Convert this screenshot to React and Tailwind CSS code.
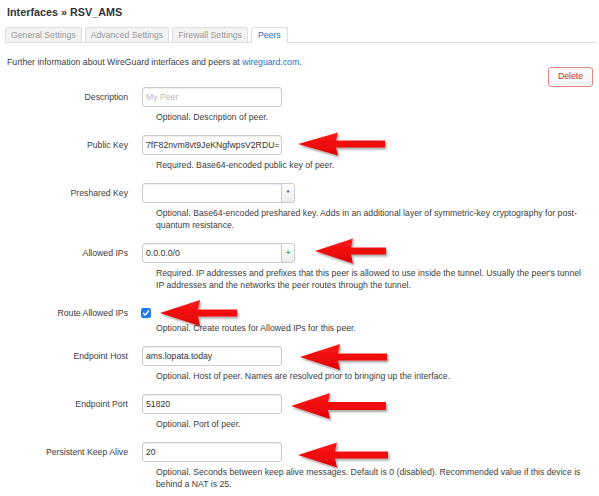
import React from 'react';

const arrows = [
  { tx: 298, ty: 144, bx: 338, ex: 385, h: 11.5, t: 3.5 },
  { tx: 315, ty: 251, bx: 353, ex: 386, h: 12.5, t: 3.5 },
  { tx: 160, ty: 313, bx: 200, ex: 237, h: 13, t: 3.5 },
  { tx: 300, ty: 357, bx: 340, ex: 387, h: 13, t: 3.5 },
  { tx: 291, ty: 406, bx: 330, ex: 386, h: 13, t: 4 },
  { tx: 298, ty: 455, bx: 337, ex: 388, h: 12.5, t: 3.5 },
];

const arrowPoints = ({ tx, ty, bx, ex, h, t }) =>
  [
    [tx, ty],
    [bx, ty - h],
    [bx - 2, ty - t],
    [ex, ty - t],
    [ex, ty + t],
    [bx - 2, ty + t],
    [bx, ty + h],
  ]
    .map((p) => p.join(','))
    .join(' ');

const Field = ({ value, placeholder, addon, addonClass }) => (
  <div className="flex h-[20px]">
    <input
      readOnly
      defaultValue={value}
      placeholder={placeholder}
      className={`w-[140px] h-[20px] border border-[#ccc] bg-white pl-[3px] pr-px text-[8.7px] text-[#333] outline-none placeholder:text-[#bbb] shadow-[inset_0_1px_1px_rgba(0,0,0,0.075)] ${
        addon ? 'rounded-l-[3px]' : 'rounded-[3px]'
      }`}
    />
    {addon && (
      <div
        className={`w-[14px] h-[20px] -ml-px flex items-center justify-center border border-[#ccc] rounded-r-[3px] bg-gradient-to-b from-white to-[#ececec] text-[8px] font-bold ${addonClass}`}
      >
        {addon}
      </div>
    )}
  </div>
);

const Row = ({ label, children, help, check }) => (
  <div className="flex mb-[12px]">
    <div
      className={`w-[128px] text-right text-[#404040] ${
        check ? 'h-[15px] leading-[20px]' : 'h-[20px] leading-[20px]'
      }`}
    >
      {label}
    </div>
    <div className="ml-[14px] flex-1">
      {children}
      <div className="mt-[4px] ml-[14px] w-[430px] leading-[12px] text-[#404040]">{help}</div>
    </div>
  </div>
);

const Checkbox = () => (
  <div className="h-[15px] pt-[5px] -ml-[1px]">
    <div className="w-[10px] h-[10px] rounded-[2px] bg-[#1f7af0] flex items-center justify-center">
      <svg width="8" height="8" viewBox="0 0 8 8">
        <path d="M1.4 4.2 L3.2 6 L6.7 1.8" fill="none" stroke="#fff" strokeWidth="1.4" strokeLinecap="round" strokeLinejoin="round" />
      </svg>
    </div>
  </div>
);

export default function App() {
  return (
    <div className="relative w-[599px] h-[496px] overflow-hidden bg-white text-[8.7px] text-[#404040] font-['Liberation_Sans',Arial,sans-serif]">
      <h2 className="pl-[7px] pt-[5px] text-[10.8px] font-bold leading-[14px] text-[#333]">Interfaces » RSV_AMS</h2>

      {/* tabs */}
      <div className="mt-[8px] ml-[5px] mr-[3px] flex gap-[3px] border-b border-[#ddd]">
        {['General Settings', 'Advanced Settings', 'Firewall Settings'].map((t) => (
          <div
            key={t}
            className="h-[15px] px-[5px] leading-[14px] border border-b-0 border-[#ddd] rounded-t-[3px] bg-[#f3f3f3] text-[#999]"
          >
            {t}
          </div>
        ))}
        <div className="h-[16px] -mb-px px-[6px] leading-[14px] border border-b-0 border-[#ddd] rounded-t-[3px] bg-white text-[#1b6fd4]">
          Peers
        </div>
      </div>

      <p className="mt-[14px] pl-[7px] leading-[10px] text-[#404040]">
        Further information about WireGuard interfaces and peers at{' '}
        <span className="text-[#1b6fd4]">wireguard.com</span>.
      </p>

      <div className="flex justify-end pr-[6px]">
        <button className="w-[45px] h-[20px] border border-[#e08585] rounded-[3px] bg-gradient-to-b from-white to-[#f3f3f3] text-[8.7px] text-[#c9302c]">
          Delete
        </button>
      </div>

      <div>
        <Row label="Description" help="Optional. Description of peer.">
          <Field placeholder="My Peer" />
        </Row>
        <Row label="Public Key" help="Required. Base64-encoded public key of peer.">
          <Field value="7fF82nvm8vt9JeKNgfwpsV2RDU=" />
        </Row>
        <Row
          label="Preshared Key"
          help="Optional. Base64-encoded preshared key. Adds in an additional layer of symmetric-key cryptography for post-quantum resistance."
        >
          <Field addon="*" addonClass="text-[#555]" />
        </Row>
        <Row
          label="Allowed IPs"
          help="Required. IP addresses and prefixes that this peer is allowed to use inside the tunnel. Usually the peer's tunnel IP addresses and the networks the peer routes through the tunnel."
        >
          <Field value="0.0.0.0/0" addon="+" addonClass="text-[#4cae4c]" />
        </Row>
        <Row check label="Route Allowed IPs" help="Optional. Create routes for Allowed IPs for this peer.">
          <Checkbox />
        </Row>
        <Row label="Endpoint Host" help="Optional. Host of peer. Names are resolved prior to bringing up the interface.">
          <Field value="ams.lopata.today" />
        </Row>
        <Row label="Endpoint Port" help="Optional. Port of peer.">
          <Field value="51820" />
        </Row>
        <Row
          label="Persistent Keep Alive"
          help="Optional. Seconds between keep alive messages. Default is 0 (disabled). Recommended value if this device is behind a NAT is 25."
        >
          <Field value="20" />
        </Row>
      </div>

      {/* red annotation arrows */}
      <svg className="absolute left-0 top-0 pointer-events-none" width="599" height="496" viewBox="0 0 599 496">
        <defs>
          <filter id="sh" x="-20%" y="-40%" width="140%" height="180%">
            <feDropShadow dx="1.5" dy="2" stdDeviation="1" floodColor="#000" floodOpacity="0.35" />
          </filter>
          <linearGradient id="rg" x1="0" y1="0" x2="0" y2="1">
            <stop offset="0" stopColor="#ff1a1a" />
            <stop offset="1" stopColor="#e00000" />
          </linearGradient>
        </defs>
        {arrows.map((a, i) => (
          <polygon key={i} points={arrowPoints(a)} fill="url(#rg)" filter="url(#sh)" />
        ))}
      </svg>
    </div>
  );
}
